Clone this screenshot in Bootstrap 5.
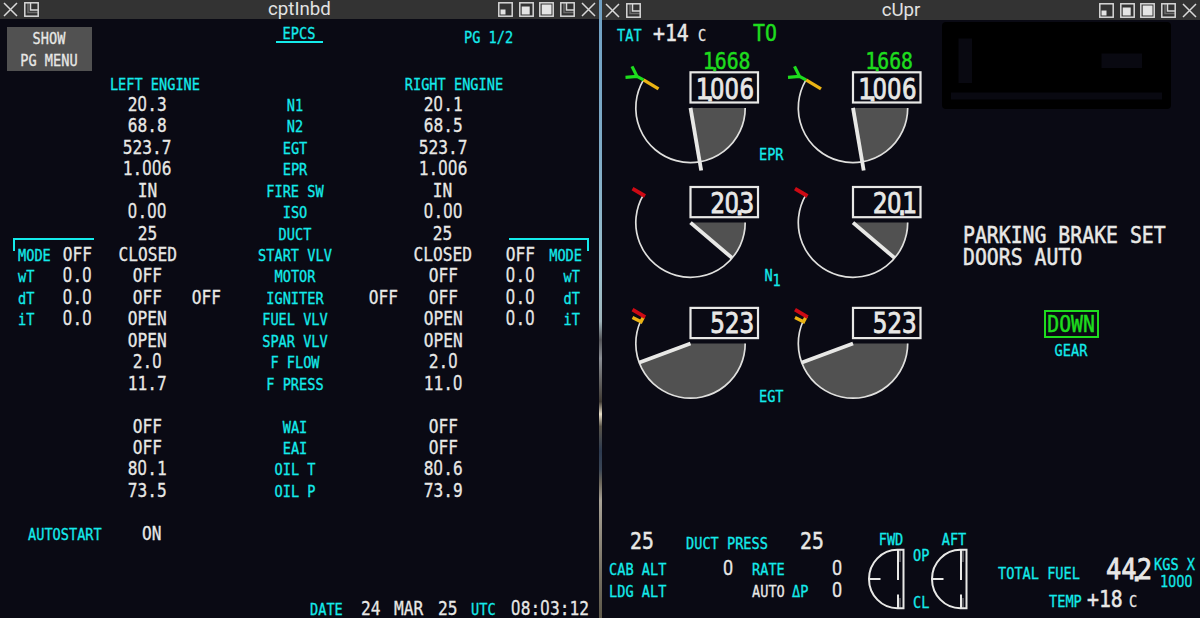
<!DOCTYPE html>
<html lang="en">
<head>
  <meta charset="UTF-8">
  <title>EICAS</title>
  <link href="https://cdn.jsdelivr.net/npm/bootstrap@5.3.0/dist/css/bootstrap.min.css" rel="stylesheet">
  <style>
    body { width: 1200px; height: 618px; background: #0a0a14; color: #e8e8e6; }
    .win-left { width: 599px; }
    .win-right { width: 598px; }
    .splitter { width: 3px; background: linear-gradient(#6fa0c4 0, #7fabc6 25%, #9cc0cc 45%, #9fb4ba 52%, #55565a 55%, #8b8f95 58%, #3f3a33 65%, #e8dfc8 67%, #5a554a 69%, #2c3a50 73%, #3a4656 76%, #6b665a 78%, #a8a296 81%, #7a7466 92%, #5d5849 100%); }
    .titlebar { background: #333; padding: 0 3px; font: 18.7px/19px Roboto, sans-serif; color: #e2e2e2; }
    .win-left .titlebar { height: 19px; }
    .win-right .titlebar { height: 20px; }
    .titlebar svg { width: 15px; height: 15px; fill: none; stroke: #d8d8d8; stroke-width: 1.5; }
    .titlebar .tools { gap: 5.7px; width: 98px; }

    /* condensed monospace display lettering */
    .t { display: inline-block; font-family: "DejaVu Sans Mono", monospace; white-space: pre; transform-origin: 0 50%; flex: none; -webkit-text-stroke: .3px currentColor; }
    .t-lb { font-size: 16.6px; transform: scaleX(.82); }
    .t-va { font-size: 19.3px; transform: scaleX(.84); }
    .t-md { font-size: 22.5px; transform: scaleX(.88); -webkit-text-stroke-width: .5px; }
    .t-nu { font-size: 20px; transform: scaleX(.88); }
    .t-lg { font-size: 29px; transform: scaleX(.876); -webkit-text-stroke-width: .8px; }
    .oc { transform-origin: 50% 50%; }
    .oe { transform-origin: 100% 50%; }
    .z { font-family: Roboto, sans-serif; font-size: 1.025em; letter-spacing: .026em; line-height: 0; }
    .dp { letter-spacing: -.5em; margin-left: -.3em; margin-right: .2em; position: relative; top: 2px; }
    .cy { color: #14ebeb; }
    .gn { color: #1edc1e; }

    .epcs-head { height: 53.5px; padding: 7.5px 0 0 7px; display: grid; grid-template-columns: 269px 188px auto; align-items: start; }
    .menu-btn { width: 84.5px; height: 44.5px; background: #515151; line-height: 22px; border-radius: 0; padding: 1px 0 0; border: 0; color: #e8e8e6; }
    .page-name { width: 46.5px; height: 16.5px; line-height: 13px; border-bottom: 2px solid #14ebeb; }
    .page-no { line-height: 20px; }
    .epcs-row { display: grid; grid-template-columns: 40px 46px 95px 22px 155px 22px 98px 56px 34px; padding-left: 14px; height: 21.44px; line-height: 21.44px; align-items: baseline; }
    .epcs-row > div { display: flex; justify-content: center; min-width: 0; }
    .epcs-row > div:first-child { justify-content: start; padding-left: 4px; }
    .epcs-row > div:last-child { justify-content: end; }
    .temp-side { margin-right: 2px; }
    .row-engines { padding-top: 1px; }
    .row-engines .left-eng { padding-left: 14px; }
    .row-engines .right-eng { padding-left: 22px; }
    .row-auto { display: grid; grid-template-columns: 114px auto; padding-left: 28px; line-height: 21.44px; align-items: baseline; }
    .row-date { display: grid; grid-template-columns: 51px 33.5px 44px 33px 40px auto; padding-left: 309.5px; line-height: 20px; align-items: baseline; margin-top: 53.5px; }
    .bracket { width: 80.5px; height: 12.5px; border-top: 2px solid #14ebeb; position: absolute; top: 238px; }
    .bracket-l { left: 13px; border-left: 2px solid #14ebeb; }
    .bracket-r { left: 508.5px; border-right: 2px solid #14ebeb; }

    .gauges { width: 325px; }
    .tat-row { display: grid; grid-template-columns: 36px 45.5px 54.5px auto; padding-left: 14.5px; height: 26px; line-height: 27.4px; align-items: baseline; }
    .gauges svg { display: block; }
    .gauges svg text { font-family: "DejaVu Sans Mono", monospace; }
    .map-panel { width: 229px; height: 87px; margin: 2px 0 0 15px; background: #000; border-radius: 4px; }
    .messages { padding-left: 36px; margin-top: 115px; line-height: 22px; }
    .gear { width: 54.5px; margin: 42px 0 0 117px; }
    .gear-box { border: 2px solid #1edc1e; height: 27.5px; width: 54.5px; line-height: 25px; }
    .gear-label { line-height: 20px; margin-top: 3px; }

    .lower { margin-top: 108.5px; }
    .lower > div { flex: none; }
    .cabin { width: 264px; }
    .duct-row { display: grid; grid-template-columns: 56px 114px auto; padding-left: 27.5px; height: 30.5px; line-height: 29px; align-items: baseline; }
    .cab-row { display: grid; grid-template-columns: 114px 29px 40px 40px auto; padding-left: 7px; height: 22.3px; line-height: 22.3px; align-items: baseline; }
    .valve { width: 42px; padding-top: 5px; line-height: 16px; }
    .valve svg { display: block; fill: none; stroke: #e8e8e6; stroke-width: 2; }
    .op-cl { width: 21px; padding: 19.3px 0 0 4.5px; line-height: 20px; height: 86px; }
    .fuel { padding: 27.8px 0 0 27.3px; }
    .fuel-row { display: grid; grid-template-columns: 107.5px 48.7px auto; height: 37px; line-height: 30px; align-items: baseline; }
    .fuel-unit { align-self: start; line-height: 17.5px; padding-top: 1.5px; }
    .fuel-scale { margin-left: 5.5px; }
    .temp-row { display: grid; grid-template-columns: 38px 42px auto; padding-left: 50.5px; line-height: 17px; align-items: baseline; }
  </style>
</head>
<body class="d-flex overflow-hidden">
  <section class="win-left position-relative">
    <div class="titlebar d-flex align-items-center justify-content-between" data-title="cptInbd"></div>
    <div class="epcs-head">
      <button class="btn menu-btn d-flex flex-column align-items-center">
        <span class="t t-lb oc">SHOW</span>
        <span class="t t-lb oc">PG MENU</span>
      </button>
      <div class="page-name d-flex justify-content-center"><span class="t t-lb oc cy">EPCS</span></div>
      <div class="page-no"><span class="t t-lb cy">PG 1/2</span></div>
    </div>
    <div class="epcs-row row-engines">
      <div></div><div></div>
      <div class="left-eng"><span class="t t-lb oc cy">LEFT ENGINE</span></div>
      <div></div><div></div><div></div>
      <div class="right-eng"><span class="t t-lb oc cy">RIGHT ENGINE</span></div>
      <div></div><div></div>
    </div>
    <div id="epcsRows"></div>
    <div class="row-auto">
      <span class="t t-lb cy">AUTOSTART</span><span class="t t-va">ON</span>
    </div>
    <div class="row-date">
      <span class="t t-lb cy">DATE</span><span class="t t-va">24</span><span class="t t-va">MAR</span><span class="t t-va">25</span>
      <span class="t t-lb cy">UTC</span><span class="t t-va">08:03:12</span>
    </div>
    <div class="bracket bracket-l"></div>
    <div class="bracket bracket-r"></div>
  </section>

  <div class="splitter"></div>

  <section class="win-right">
    <div class="titlebar d-flex align-items-center justify-content-between" data-title="cUpr"></div>
    <div class="d-flex">
      <div class="gauges">
        <div class="tat-row">
          <span class="t t-lb cy">TAT</span><span class="t t-md">+14</span><span class="t t-lb">C</span><span class="t t-md gn">TO</span>
        </div>
        <div id="gaugeRows"></div>
      </div>
      <div>
        <div class="map-panel">
          <svg width="229" height="87" fill="#090911">
            <rect x="16.5" y="16.5" width="13.5" height="44.5"/>
            <rect x="159.5" y="31.5" width="40.5" height="14.5"/>
            <rect x="9" y="70.5" width="211" height="7"/>
          </svg>
        </div>
        <div class="messages d-flex flex-column align-items-start">
          <span class="t t-md">PARKING BRAKE SET</span>
          <span class="t t-md">DOORS AUTO</span>
        </div>
        <div class="gear">
          <div class="gear-box d-flex justify-content-center"><span class="t t-md oc gn">DOWN</span></div>
          <div class="gear-label d-flex justify-content-center"><span class="t t-lb oc cy">GEAR</span></div>
        </div>
      </div>
    </div>

    <div class="lower d-flex">
      <div class="cabin">
        <div class="duct-row">
          <span class="t t-md">25</span><span class="t t-lb cy">DUCT PRESS</span><span class="t t-md">25</span>
        </div>
        <div class="cab-row">
          <span class="t t-lb cy">CAB ALT</span><span class="t t-nu">0</span><span class="t t-lb cy">RATE</span><span></span><span class="t t-nu">0</span>
        </div>
        <div class="cab-row">
          <span class="t t-lb cy">LDG ALT</span><span></span><span class="t t-lb">AUTO</span><span class="t t-lb cy">ΔP</span><span class="t t-nu">0</span>
        </div>
      </div>
      <div class="valve">
        <div class="d-flex justify-content-center ps-2"><span class="t t-lb oc cy">FWD</span></div>
        <svg width="42" height="62"><use href="#valve"/></svg>
      </div>
      <div class="op-cl d-flex flex-column justify-content-between align-items-start">
        <span class="t t-lb cy">OP</span>
        <span class="t t-lb cy">CL</span>
      </div>
      <div class="valve">
        <div class="d-flex justify-content-center ps-2"><span class="t t-lb oc cy">AFT</span></div>
        <svg width="42" height="62"><use href="#valve"/></svg>
      </div>
      <div class="fuel">
        <div class="fuel-row">
          <span class="t t-lb cy">TOTAL FUEL</span>
          <span class="t t-lg">44<span class="dp">.</span>2</span>
          <div class="fuel-unit d-flex flex-column align-items-start">
            <span class="t t-lb cy">KGS X</span>
            <span class="t t-lb cy fuel-scale">1000</span>
          </div>
        </div>
        <div class="temp-row">
          <span class="t t-lb cy">TEMP</span><span class="t t-md">+18</span><span class="t t-lb">C</span>
        </div>
      </div>
    </div>
  </section>

  <svg width="0" height="0" class="position-absolute">
    <defs>
      <g id="valve">
        <path d="M37.500 1.800H31.500A28.500 29.200 0 0 0 31.500 60.200H37.500Z"/>
        <path d="M32 2V32M32 46.500V60M3 31H14.500"/>
        <path d="M34 2V14M34 50V60" stroke-width="1" opacity=".6"/>
      </g>
    </defs>
  </svg>

  <script>
    const icons = {
      close: '<path d="M1 1L14 14M14 1L1 14"/>',
      restore: '<rect x=".8" y=".8" width="13.4" height="13.4"/><path d="M6.5 1V8H14"/><path d="M4 1V10.5H14" opacity=".35"/>',
      small: '<rect x=".8" y=".8" width="13.4" height="13.4"/><rect x="2.5" y="7.5" width="5" height="5" fill="#e4e4e4" stroke="none"/>',
      medium: '<rect x=".8" y=".8" width="13.4" height="13.4"/><rect x="2.7" y="4.5" width="8" height="8" fill="#e4e4e4" stroke="none"/>',
      large: '<rect x=".8" y=".8" width="13.4" height="13.4"/><rect x="2.7" y="2.5" width="9.8" height="10" fill="#e4e4e4" stroke="none"/>'
    };
    const icon = name => `<svg viewBox="0 0 15 15">${icons[name]}</svg>`;

    document.querySelectorAll(".titlebar").forEach(bar => {
      bar.innerHTML = `
        <div class="tools d-flex">${icon("close")}${icon("restore")}</div>
        <span>${bar.dataset.title}</span>
        <div class="tools d-flex">${["small", "medium", "large", "restore", "close"].map(icon).join("")}</div>`;
    });

    // label, left, right, plus optional outer columns
    const rows = [
      { label: "N1", l: "20.3", r: "20.1" },
      { label: "N2", l: "68.8", r: "68.5" },
      { label: "EGT", l: "523.7", r: "523.7" },
      { label: "EPR", l: "1.006", r: "1.006" },
      { label: "FIRE SW", l: "IN", r: "IN" },
      { label: "ISO", l: "0.00", r: "0.00" },
      { label: "DUCT", l: "25", r: "25" },
      { label: "START VLV", l: "CLOSED", r: "CLOSED", side: "MODE", v: "OFF" },
      { label: "MOTOR", l: "OFF", r: "OFF", side: "wT", v: "0.0" },
      { label: "IGNITER", l: "OFF", r: "OFF", side: "dT", v: "0.0", inner: "OFF" },
      { label: "FUEL VLV", l: "OPEN", r: "OPEN", side: "iT", v: "0.0" },
      { label: "SPAR VLV", l: "OPEN", r: "OPEN" },
      { label: "F FLOW", l: "2.0", r: "2.0" },
      { label: "F PRESS", l: "11.7", r: "11.0" },
      {},
      { label: "WAI", l: "OFF", r: "OFF" },
      { label: "EAI", l: "OFF", r: "OFF" },
      { label: "OIL T", l: "80.1", r: "80.6" },
      { label: "OIL P", l: "73.5", r: "73.9" },
      {}
    ];
    const cell = (text, cls) => `<div>${text ? `<span class="t ${cls}">${text}</span>` : ""}</div>`;
    document.getElementById("epcsRows").innerHTML = rows.map(r => `
      <div class="epcs-row">
        ${cell(r.side, "t-lb cy")}${cell(r.v, "t-va oc")}${cell(r.l, "t-va oc")}${cell(r.inner, "t-va oc")}
        ${cell(r.label, "t-lb oc cy")}
        ${cell(r.inner, "t-va oc")}${cell(r.r, "t-va oc")}${cell(r.v, "t-va oc")}${cell(r.side, r.side === "MODE" ? "t-lb oe cy" : "t-lb oe cy temp-side")}
      </div>`).join("");

    // plain zeros instead of the dotted monospace ones
    const zeros = (s, tag) => s.replace(/0+/g, m => `<${tag} class="z">${m}</${tag}>`);
    document.querySelectorAll(".t").forEach(el => {
      if (!el.children.length) el.innerHTML = zeros(el.textContent, "span");
    });

    // digits end at x; the decimal point hangs between two digits
    function digits(text, x, y, size, sx, color) {
      const adv = size * .602;
      const start = x - text.replace(".", "").length * adv * sx;
      const [a, b] = text.split(".");
      const tail = b ? `<tspan dx="${-adv / 2}" dy="2">.</tspan><tspan dx="${-adv / 2}" dy="-2">${zeros(b, "tspan")}</tspan>` : "";
      return `<text transform="translate(${start} ${y}) scale(${sx} 1)" font-size="${size}" fill="${color}" stroke="${color}" stroke-width="${size > 25 ? .8 : .5}">${zeros(a, "tspan")}${tail}</text>`;
    }

    const R = 54.7;
    const at = (deg, r) => `${r * Math.cos(deg * Math.PI / 180)} ${r * Math.sin(deg * Math.PI / 180)}`;

    function gauge(g, value, x, y) {
      return `<g transform="translate(${x} ${y})" fill="none">
        <path d="M0 0L${R} 0A${R} ${R} 0 0 1 ${at(g.angle, R)}Z" fill="#515151"/>
        <path d="M${R} 0A${R} ${R} 0 1 1 ${at(g.end, R)}" stroke="#e0e0de" stroke-width="1.7"/>
        <path d="M0 0L${at(g.angle, g.len)}" stroke="#e8e8e6" stroke-width="3.8"/>
        ${g.marks}
        <rect x="0" y="-35.6" width="67.5" height="30.2" stroke="#e8e8e6" stroke-width="2.2"/>
        ${digits(value, 63.7, g.base, 28, .87, "#e8e8e6")}
        ${g.target ? digits(g.target, 60, -38.8, 23, .86, "#1edc1e") : ""}
      </g>`;
    }

    const label = (text, x, y) =>
      `<text transform="translate(${x} ${y}) scale(.82 1)" font-size="16.6" fill="#14ebeb" stroke="#14ebeb" stroke-width=".3">${text}</text>`;

    const gauges = [
      {
        values: ["1.006", "1.006"], target: "1.668", angle: 80.3, len: 63.5, end: 210.5, y: 61.9, h: 130, base: -9.3,
        marks: `<path d="M-47-28L-32-19" stroke="#ebb414" stroke-width="3.4"/>
          <path d="M-47-28L-53.5-31.5L-58.5-41.5M-53.5-31.5L-65-30.6" stroke="#1edc1e" stroke-width="3.2"/>`,
        text: label("EPR", 157, 114)
      },
      {
        values: ["20.3", "20.1"], angle: 40.4, len: 54.5, end: 210.5, y: 46.6, h: 122, base: -9.8,
        marks: '<path d="M-58-34L-45.5-26.6" stroke="#cd0a14" stroke-width="3.8"/>',
        text: label("N", 162.5, 105) + label("1", 170.5, 109.5)
      },
      {
        values: ["523", "523"], angle: 159.6, len: 54.5, end: 204, y: 45.5, h: 120, base: -11,
        marks: `<path d="M-58-26L-49.5-21.8L-46.8-27" stroke="#ebb414" stroke-width="3.4"/>
          <path d="M-58-33.8L-45.3-26.3" stroke="#cd0a14" stroke-width="3.8"/>`,
        text: label("EGT", 157, 104)
      }
    ];
    document.getElementById("gaugeRows").innerHTML = gauges.map(g => `
      <svg width="325" height="${g.h}">
        ${gauge(g, g.values[0], 88.5, g.y)}${gauge(g, g.values[1], 251, g.y)}${g.text}
      </svg>`).join("");
  </script>
  <script src="https://cdn.jsdelivr.net/npm/bootstrap@5.3.0/dist/js/bootstrap.bundle.min.js"></script>
</body>
</html>
